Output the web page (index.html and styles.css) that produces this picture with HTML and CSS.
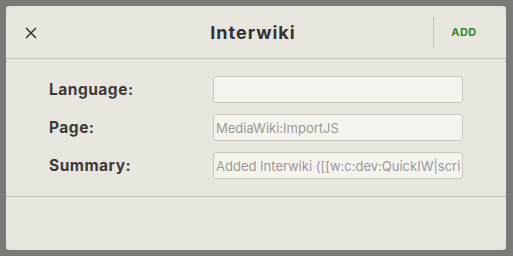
FILE: index.html
```html
<!DOCTYPE html>
<html>
<head>
<meta charset="UTF-8">
<title>Interwiki</title>
<link rel="stylesheet" href="styles.css">
</head>
<body>
	<div class="dialog">
		<div class="dialog-header">
			<a href="javascript:void(0)" class="close-btn">
				<svg width="12" height="12" viewBox="0 0 12 12"><path d="M1 1 L11 11 M11 1 L1 11" stroke="#333" stroke-width="1.5" fill="none"/></svg>
			</a>
			<div class="dialog-title">Interwiki</div>
			<div class="dialog-tool">
				<a href="javascript:void(0)" class="add-btn">ADD</a>
			</div>
		</div>
		<div class="dialog-body">
			<form id="iwfm" class="fgrid">
				<label>Language:</label>
				<input type="text" name="lang" class="finput">
				<label>Page:</label>
				<input type="text" name="page" class="finput" value="MediaWiki:ImportJS">
				<label>Summary:</label>
				<input type="text" name="summary" class="finput" value="Added Interwiki ([[w:c:dev:QuickIW|script]])">
			</form>
		</div>
		<div class="dialog-footer"></div>
	</div>
</body>
</html>
```

FILE: styles.css
```css
html, body {
	margin: 0;
	padding: 0;
	background: #7b7a76;
}

body {
	padding: 6px 7px 6px 6px;
	font-family: Inter, "Noto Sans", sans-serif;
	color: #3a3a3a;
}

.dialog {
	background: #e9e6e0;
	border-radius: 3px;
	height: 244px;
	display: flex;
	flex-direction: column;
}

.dialog-header {
	height: 52px;
	border-bottom: 1px solid #c4c2bd;
	display: flex;
	align-items: center;
}

.close-btn {
	width: 50px;
	display: flex;
	justify-content: center;
	align-items: center;
	margin-top: 2px;
}

.dialog-title {
	flex: 1;
	text-align: center;
	font-size: 18px;
	font-weight: bold;
	letter-spacing: 1px;
	color: #333;
	padding-left: 17px;
}

.dialog-tool {
	height: 31px;
	border-left: 1px solid #c4c2bd;
	width: 72px;
	display: flex;
	align-items: center;
	justify-content: center;
	margin-right: 1px;
	padding-right: 11px;
	box-sizing: border-box;
}

.add-btn {
	font-size: 11px;
	font-weight: bold;
	color: #378a2b;
	text-decoration: none;
	letter-spacing: 0.5px;
}

.dialog-body {
	height: 138px;
	border-bottom: 1px solid #c4c2bd;
	padding: 17px 0 0 43px;
	box-sizing: border-box;
}

.fgrid {
	margin: 0;
	display: grid;
	grid-template-columns: 164px 250px;
	row-gap: 11px;
	align-items: center;
}

.fgrid label {
	font-size: 15.5px;
	font-weight: bold;
	letter-spacing: 0.5px;
	color: #3a3a3a;
}

.finput {
	height: 27px;
	box-sizing: border-box;
	border: 1px solid #c9c6c0;
	border-radius: 3px;
	background: #f5f3ee;
	padding: 0 2px;
	font-family: Inter, "Noto Sans", sans-serif;
	font-size: 13px;
	color: #999;
	outline: none;
	width: 250px;
}

.dialog-footer {
	flex: 1;
}
```
